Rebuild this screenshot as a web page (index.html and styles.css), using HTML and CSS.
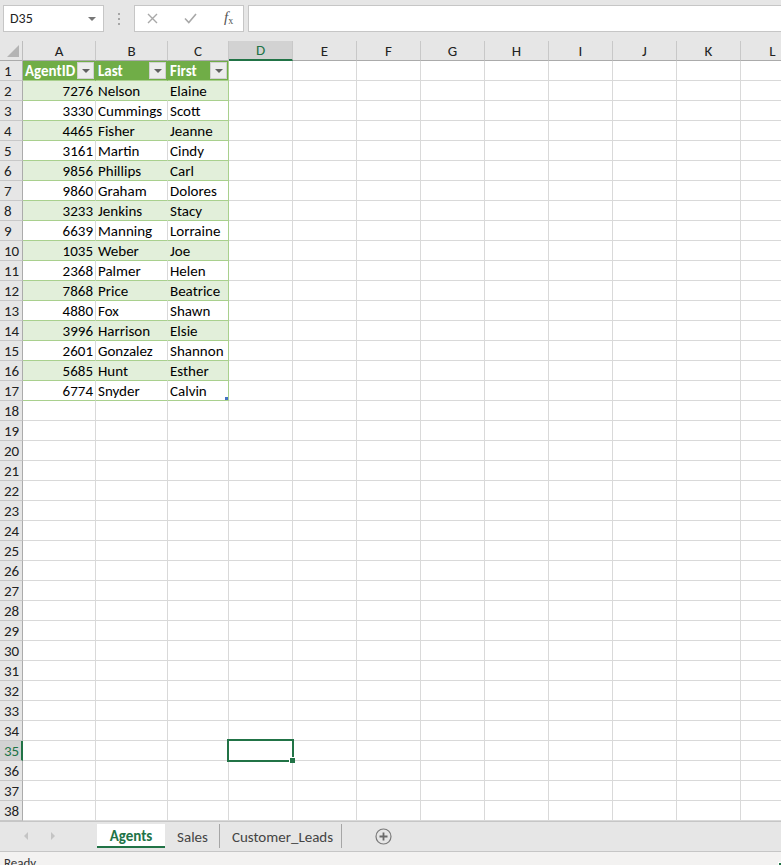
FILE: index.html
```html
<!DOCTYPE html>
<html lang="en">
<head>
  <meta charset="UTF-8">
  <title>Agents - Excel</title>
  <link rel="stylesheet" href="styles.css">
</head>
<body>

  <div class="topbar">
    <div class="namebox">
      <span>D35</span>
      <span class="caret"></span>
    </div>
    <svg class="grip" width="4" height="12" viewBox="0 0 4 12">
      <rect x="1" y="0" width="2" height="2" fill="#a6a6a6"/>
      <rect x="1" y="5" width="2" height="2" fill="#a6a6a6"/>
      <rect x="1" y="10" width="2" height="2" fill="#a6a6a6"/>
    </svg>
    <div class="fx-buttons">
      <svg class="btn-cancel" width="11" height="11" viewBox="0 0 11 11">
        <path d="M1 1 L10 10 M10 1 L1 10" stroke="#a8a8a8" stroke-width="1.4" fill="none"/>
      </svg>
      <svg class="btn-enter" width="13" height="11" viewBox="0 0 13 11">
        <path d="M1 5.5 L4.8 9.5 L12 1" stroke="#a8a8a8" stroke-width="1.6" fill="none"/>
      </svg>
      <span class="fx"><i>f</i><sub>x</sub></span>
    </div>
    <div class="formula"></div>
  </div>

  <div class="sheet">
    <div class="grid" id="grid"></div>
  </div>

  <div class="tabbar">
    <div class="tab-nav">
      <span class="nav-left"></span>
      <span class="nav-right"></span>
    </div>
    <div class="tab active">Agents</div>
    <div class="tab sales">Sales</div>
    <div class="tab leads">Customer_Leads</div>
    <svg class="add-sheet" width="17" height="17" viewBox="0 0 17 17">
      <circle cx="8.5" cy="8.5" r="7.5" stroke="#7a7a7a" stroke-width="1.2" fill="none"/>
      <path d="M8.5 4.5 V12.5 M4.5 8.5 H12.5" stroke="#6a6a6a" stroke-width="1.8"/>
    </svg>
  </div>

  <div class="status">Ready</div>

  <script>
    var agents = [
      [7276, 'Nelson', 'Elaine'],
      [3330, 'Cummings', 'Scott'],
      [4465, 'Fisher', 'Jeanne'],
      [3161, 'Martin', 'Cindy'],
      [9856, 'Phillips', 'Carl'],
      [9860, 'Graham', 'Dolores'],
      [3233, 'Jenkins', 'Stacy'],
      [6639, 'Manning', 'Lorraine'],
      [1035, 'Weber', 'Joe'],
      [2368, 'Palmer', 'Helen'],
      [7868, 'Price', 'Beatrice'],
      [4880, 'Fox', 'Shawn'],
      [3996, 'Harrison', 'Elsie'],
      [2601, 'Gonzalez', 'Shannon'],
      [5685, 'Hunt', 'Esther'],
      [6774, 'Snyder', 'Calvin']
    ];
    var headings = ['AgentID', 'Last', 'First'];
    var cols = ['A', 'B', 'C', 'D', 'E', 'F', 'G', 'H', 'I', 'J', 'K', 'L'];
    var activeCol = 3, activeRow = 35;
    var grid = document.getElementById('grid');

    function cell(cls, text) {
      var div = document.createElement('div');
      div.className = 'cell ' + cls;
      if (text !== undefined) div.textContent = text;
      grid.appendChild(div);
      return div;
    }

    // column headers
    cell('corner').innerHTML = '<span class="corner-tri"></span>';
    cols.forEach(function (c, i) {
      cell('col-head' + (i === activeCol ? ' selected' : ''), c);
    });

    // rows
    for (var r = 1; r <= 38; r++) {
      cell('row-head' + (r === activeRow ? ' selected' : ''), r);
      for (var c = 0; c < cols.length; c++) {
        var cls = '';
        var text = undefined;
        var inTable = c < 3 && r <= 17;
        if (inTable && r === 1) {
          cls = 't-head';
        } else if (inTable) {
          cls = (r % 2 === 0) ? 't-band' : 't-plain';
          text = agents[r - 2][c];
          if (c === 0) cls += ' num';
        }
        if (inTable && c === 2) cls += ' t-last';
        if (r === 17 && c === 2) cls += ' t-end';
        if (r === activeRow && c === activeCol) cls += ' active';
        var el = cell(cls, text);
        if (inTable && r === 1) {
          el.innerHTML = '<span class="label">' + headings[c] +
            '</span><span class="filter"></span>';
        }
      }
    }
  </script>

</body>
</html>
```

FILE: styles.css
```css
body {
  margin: 0;
  width: 781px;
  height: 865px;
  overflow: hidden;
  background: #e6e6e6;
  font-family: Calibri, Carlito, Lato, "Liberation Sans", sans-serif;
  font-size: 15px;
  color: #000;
}

/* name box + formula bar */
.topbar {
  height: 41px;
  box-sizing: border-box;
  padding-top: 5px;
  display: flex;
  align-items: flex-start;
}

.namebox {
  margin-left: 3px;
  width: 101px;
  height: 27px;
  box-sizing: border-box;
  background: white;
  border: 1px solid #c6c6c6;
  display: flex;
  align-items: center;
  justify-content: space-between;
  padding: 0 7px 0 6px;
  font-size: 14px;
  color: #222;
}

.caret {
  width: 0;
  height: 0;
  border-left: 4px solid transparent;
  border-right: 4px solid transparent;
  border-top: 4px solid #777;
}

.grip {
  margin: 8px 13px 0 13px;
}

.fx-buttons {
  width: 110px;
  height: 27px;
  box-sizing: border-box;
  background: white;
  border: 1px solid #c6c6c6;
  display: flex;
  align-items: center;
  padding-left: 12px;
}

.btn-cancel {
  margin-right: 26px;
}

.btn-enter {
  margin-right: 27px;
}

.fx {
  font-family: "Liberation Serif", serif;
  font-size: 15px;
  color: #555;
  margin-top: -3px;
}

.fx sub {
  font-size: 10px;
  vertical-align: -2px;
}

.formula {
  flex: 1;
  margin-left: 4px;
  margin-right: -2px;
  height: 27px;
  box-sizing: border-box;
  background: white;
  border: 1px solid #c6c6c6;
}

/* worksheet grid */
.sheet {
  height: 780px;
  overflow: hidden;
  background: white;
}

.grid {
  display: grid;
  grid-template-columns: 23px 73px 72px 61px repeat(9, 64px);
  grid-auto-rows: 20px;
  width: 805px;
}

.cell {
  box-sizing: border-box;
  border-right: 1px solid #d9d9d9;
  border-bottom: 1px solid #d9d9d9;
  padding: 0 2px;
  line-height: 20px;
  white-space: nowrap;
  overflow: hidden;
  position: relative;
}

.corner {
  background: #e6e6e6;
  border-right: 1px solid #bdbdbd;
  border-bottom: 1px solid #ababab;
}

.corner-tri {
  position: absolute;
  right: 3px;
  bottom: 3px;
  width: 0;
  height: 0;
  border-left: 12px solid transparent;
  border-bottom: 12px solid #b4b4b4;
}

.col-head {
  background: #e6e6e6;
  text-align: center;
  border-right: 1px solid #c8c8c8;
  border-bottom: 1px solid #ababab;
  color: #222;
}

.col-head.selected {
  background: #d2d2d2;
  color: #217346;
  border-bottom: 2px solid #217346;
  line-height: 19px;
}

.row-head {
  background: #e6e6e6;
  border-right: 1px solid #ababab;
  border-bottom: 1px solid #c8c8c8;
  padding-left: 4px;
  color: #222;
}

.row-head.selected {
  background: #d2d2d2;
  color: #217346;
  border-right: 2px solid #217346;
}

/* Agents table */
.t-head {
  background: #70ad47;
  color: white;
  font-weight: bold;
  border-right-color: #70ad47;
  border-bottom-color: #a9d08e;
  display: flex;
  align-items: center;
  padding-right: 1px;
}

.t-head .label {
  flex: 1;
}

.filter {
  width: 17px;
  height: 17px;
  box-sizing: border-box;
  background: #ececec;
  border: 1px solid #d0d0d0;
  display: flex;
  align-items: center;
  justify-content: center;
}

.filter::after {
  content: "";
  width: 0;
  height: 0;
  border-left: 4px solid transparent;
  border-right: 4px solid transparent;
  border-top: 4px solid #606060;
}

.t-band {
  background: #e2efda;
  border-right-color: #e2efda;
  border-bottom-color: #a9d08e;
}

.t-plain {
  border-bottom-color: #a9d08e;
}

.t-last {
  border-right-color: #a9d08e;
}

.num {
  text-align: right;
}

.t-end::after {
  content: "";
  position: absolute;
  right: 0;
  bottom: 0;
  width: 3px;
  height: 3px;
  background: #4472c4;
}

/* selected cell */
.active {
  overflow: visible;
  z-index: 2;
}

.active::before {
  content: "";
  position: absolute;
  inset: -2px;
  border: 2px solid #217346;
}

.active::after {
  content: "";
  position: absolute;
  right: -3px;
  bottom: -3px;
  width: 5px;
  height: 5px;
  background: #217346;
  border: 1px solid white;
  border-right: none;
  border-bottom: none;
}

/* sheet tabs */
.tabbar {
  height: 31px;
  box-sizing: border-box;
  border-top: 1px solid #c6c6c6;
  padding-top: 2px;
  display: flex;
  align-items: flex-start;
  background: #e6e6e6;
  border-bottom: 1px solid #c6c6c6;
}

.tab-nav {
  width: 97px;
  height: 24px;
  display: flex;
  align-items: center;
}

.nav-left {
  margin-left: 24px;
  border-top: 4px solid transparent;
  border-bottom: 4px solid transparent;
  border-right: 4px solid #c4c4c4;
}

.nav-right {
  margin-left: 23px;
  border-top: 4px solid transparent;
  border-bottom: 4px solid transparent;
  border-left: 4px solid #c4c4c4;
}

.tab {
  height: 24px;
  box-sizing: border-box;
  line-height: 26px;
  text-align: center;
  color: #444;
}

.tab.active {
  width: 68px;
  background: white;
  color: #217346;
  font-weight: bold;
  border-bottom: 2px solid #217346;
  line-height: 25px;
}

.tab.sales {
  width: 55px;
  border-right: 1px solid #a6a6a6;
  padding-left: 1px;
}

.tab.leads {
  width: 122px;
  border-right: 1px solid #a6a6a6;
  padding-left: 4px;
}

.add-sheet {
  margin: 4px 0 0 33px;
}

.status {
  height: 13px;
  background: #f3f2f1;
  padding-left: 4px;
  font-size: 13px;
  line-height: 22px;
  color: #333;
  overflow: hidden;
}
```
